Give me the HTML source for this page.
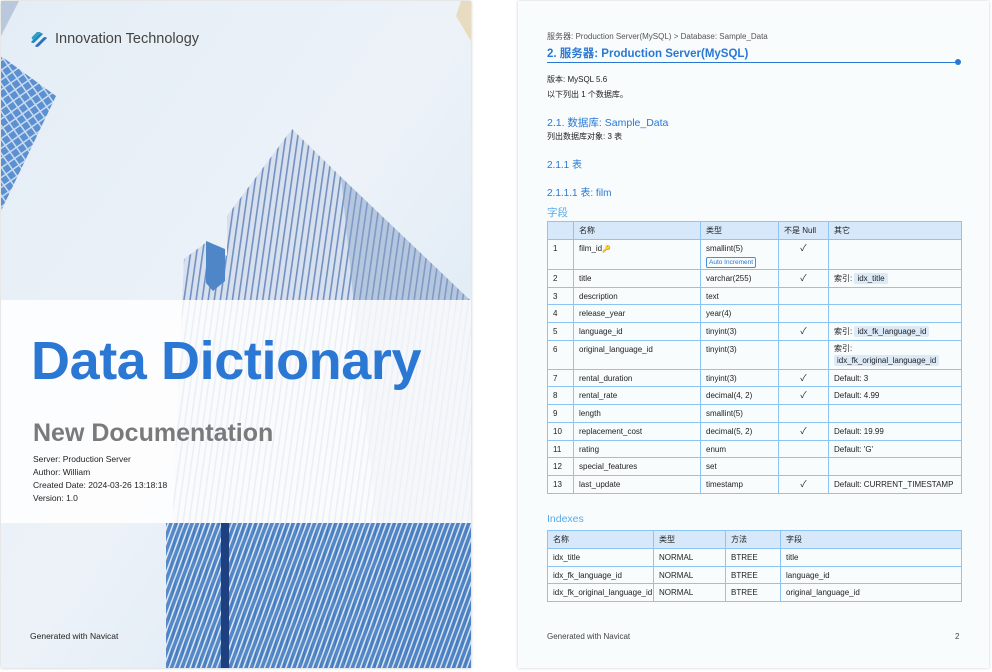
<!DOCTYPE html>
<html><head><meta charset="utf-8">
<style>
*{margin:0;padding:0;box-sizing:border-box}
body{width:992px;height:672px;background:#fff;position:relative;overflow:hidden;font-family:"Liberation Sans","Noto Sans CJK SC",sans-serif}
.cover{position:absolute;left:1px;top:1px;width:470px;height:667px;overflow:hidden;box-shadow:0 0 3px rgba(0,0,0,.25)}
.cover svg.bg{position:absolute;left:0;top:0}
.band{position:absolute;left:0;top:299px;width:470px;height:223px;background:rgba(255,255,255,.86)}
.logo{position:absolute;left:28px;top:28px;height:20px}
.logo svg{position:absolute;left:0;top:0;width:20px;height:20px}
.logo span{position:absolute;left:26px;top:2px;font-size:14.5px;color:#444;white-space:nowrap}
.dd{position:absolute;left:30px;top:329px;font-size:54px;font-weight:bold;color:#2a78d4;white-space:nowrap;letter-spacing:-0.4px}
.nd{position:absolute;left:32px;top:418px;font-size:25px;font-weight:bold;color:#7a7a7a}
.meta{position:absolute;left:32px;top:452px;font-size:8.5px;color:#222;line-height:13px}
.gen1{position:absolute;left:29px;top:630px;font-size:8.5px;color:#222}
.page{position:absolute;left:518px;top:1px;width:471px;height:667px;background:#f8fcfd;box-shadow:0 0 3px rgba(0,0,0,.2);color:#222}
.a{position:absolute;font-size:8px;white-space:nowrap}
.h{position:absolute;color:#2a78d4;white-space:nowrap}
table{position:absolute;border-collapse:collapse;font-size:8px;table-layout:fixed}
td,th{border:1px solid #8cc4f3;padding:0 0 0 5px;text-align:left;font-weight:normal;vertical-align:top;padding-top:4px;white-space:nowrap;overflow:hidden;line-height:9px}
th{background:#d7e8fa;height:18px}
td{height:17.7px}
.c{text-align:center;padding-left:0;font-size:9px}
.tag{background:#dce9f7;padding:1px 3px;border-radius:2px}
.ai{display:inline-block;border:1px solid #4a90d9;color:#2a78d4;border-radius:2px;padding:0 2px;font-size:6.5px;margin-top:4px;line-height:9px}
</style></head><body>
<div class="cover">
<svg class="bg" width="470" height="667" viewBox="0 0 470 667">
<defs>
<linearGradient id="sky" x1="0" y1="0" x2="1" y2="1"><stop offset="0" stop-color="#e4edf6"/><stop offset=".5" stop-color="#edf2f8"/><stop offset="1" stop-color="#d5e6f4"/></linearGradient>
<pattern id="st" width="6" height="6" patternUnits="userSpaceOnUse" patternTransform="rotate(8)"><rect width="6" height="6" fill="#d6e0ee"/><rect width="1.6" height="6" fill="#7390c0"/></pattern>
<pattern id="st2" width="5" height="5" patternUnits="userSpaceOnUse" patternTransform="rotate(20)"><rect width="5" height="5" fill="#3d78c0"/><rect width="1.5" height="5" fill="#dfe8f3"/></pattern>
<pattern id="gr" width="8" height="8" patternUnits="userSpaceOnUse" patternTransform="rotate(-35)"><rect width="8" height="8" fill="#5d90d0"/><rect width="8" height="1.5" fill="#c8dcf2"/><rect width="1.5" height="8" fill="#c8dcf2"/></pattern>
</defs>
<rect width="470" height="667" fill="url(#sky)"/>
<polygon points="0,55 55,95 0,210" fill="url(#gr)"/>
<polygon points="0,0 18,0 0,35" fill="#b9c8da"/>
<polygon points="460,0 470,0 470,40 455,15" fill="#e8dcc0"/>
<polygon points="183,258 207,240 226,255 226,667 165,667" fill="url(#st)"/>
<polygon points="205,240 224,248 224,280 212,290 205,282" fill="#4f86c8"/>
<polygon points="291,128 226,215 226,667 470,667 470,300 340,176" fill="url(#st)"/>
<polygon points="340,176 470,300 470,667 390,667" fill="#8ea7cc" opacity=".45"/>
<polygon points="165,522 470,522 470,667 165,667" fill="url(#st2)" opacity=".85"/>
<rect x="220" y="522" width="8" height="145" fill="#1e3f80"/>
</svg>
<div class="band"></div>
<div class="logo"><svg viewBox="0 0 20 20"><path d="M2 13 L10 5 Q12 3 14 5 L6 13 Q4 15 2 13Z" fill="#1b8bb8"/><path d="M6 17 L14 9 Q16 7 18 9 L10 17 Q8 19 6 17Z" fill="#2a6fc0"/><path d="M8 3 L12 3 L4 11 Q2 9 3 8Z" fill="#2c9fc8"/></svg><span>Innovation Technology</span></div>
<div class="dd">Data Dictionary</div>
<div class="nd">New Documentation</div>
<div class="meta">Server: Production Server<br>Author: William<br>Created Date: 2024-03-26 13:18:18<br>Version: 1.0</div>
<div class="gen1">Generated with Navicat</div>
</div>

<div class="page">
<div class="a" style="left:29px;top:30px;color:#555">服务器: Production Server(MySQL) &gt; Database: Sample_Data</div>
<div class="h" style="left:29px;top:44px;font-size:11.5px;font-weight:bold">2. 服务器: Production Server(MySQL)</div>
<div style="position:absolute;left:29px;top:61px;width:411px;height:1px;background:#2a78d4"></div>
<div style="position:absolute;left:437px;top:58px;width:6px;height:6px;border-radius:3px;background:#2a78d4"></div>
<div class="a" style="left:29px;top:73px">版本: MySQL 5.6</div>
<div class="a" style="left:29px;top:88px">以下列出 1 个数据库。</div>
<div class="h" style="left:29px;top:114px;font-size:10.5px">2.1. 数据库: Sample_Data</div>
<div class="a" style="left:29px;top:130px">列出数据库对象: 3 表</div>
<div class="h" style="left:29px;top:155px;font-size:10px">2.1.1 表</div>
<div class="h" style="left:29px;top:183px;font-size:10px">2.1.1.1 表: film</div>
<div class="h" style="left:29px;top:204px;font-size:10.5px;color:#5aa9e6">字段</div>
<table style="left:29px;top:220px;width:414px">
<colgroup><col style="width:26px"><col style="width:127px"><col style="width:78px"><col style="width:50px"><col style="width:133px"></colgroup>
<tr><th></th><th>名称</th><th>类型</th><th>不是 Null</th><th>其它</th></tr>
<tr><td style="height:30px">1</td><td>film_id<span style="color:#e8a400;font-size:7px">🔑</span></td><td>smallint(5)<br><span class="ai">Auto Increment</span></td><td class="c">✓</td><td></td></tr>
<tr><td>2</td><td>title</td><td>varchar(255)</td><td class="c">✓</td><td>索引: <span class="tag">idx_title</span></td></tr>
<tr><td>3</td><td>description</td><td>text</td><td></td><td></td></tr>
<tr><td>4</td><td>release_year</td><td>year(4)</td><td></td><td></td></tr>
<tr><td>5</td><td>language_id</td><td>tinyint(3)</td><td class="c">✓</td><td>索引: <span class="tag">idx_fk_language_id</span></td></tr>
<tr><td style="height:29px">6</td><td>original_language_id</td><td>tinyint(3)</td><td></td><td style="line-height:12px;padding-top:2px">索引:<br><span class="tag">idx_fk_original_language_id</span></td></tr>
<tr><td>7</td><td>rental_duration</td><td>tinyint(3)</td><td class="c">✓</td><td>Default: 3</td></tr>
<tr><td>8</td><td>rental_rate</td><td>decimal(4, 2)</td><td class="c">✓</td><td>Default: 4.99</td></tr>
<tr><td>9</td><td>length</td><td>smallint(5)</td><td></td><td></td></tr>
<tr><td>10</td><td>replacement_cost</td><td>decimal(5, 2)</td><td class="c">✓</td><td>Default: 19.99</td></tr>
<tr><td>11</td><td>rating</td><td>enum</td><td></td><td>Default: 'G'</td></tr>
<tr><td>12</td><td>special_features</td><td>set</td><td></td><td></td></tr>
<tr><td>13</td><td>last_update</td><td>timestamp</td><td class="c">✓</td><td>Default: CURRENT_TIMESTAMP</td></tr>
</table>
<div class="h" style="left:29px;top:512px;font-size:10.5px;color:#5aa9e6">Indexes</div>
<table style="left:29px;top:529px;width:414px">
<colgroup><col style="width:106px"><col style="width:72px"><col style="width:55px"><col style="width:181px"></colgroup>
<tr><th>名称</th><th>类型</th><th>方法</th><th>字段</th></tr>
<tr><td>idx_title</td><td>NORMAL</td><td>BTREE</td><td>title</td></tr>
<tr><td>idx_fk_language_id</td><td>NORMAL</td><td>BTREE</td><td>language_id</td></tr>
<tr><td>idx_fk_original_language_id</td><td>NORMAL</td><td>BTREE</td><td>original_language_id</td></tr>
</table>
<div class="a" style="left:29px;top:631px;color:#444">Generated with Navicat</div>
<div class="a" style="left:437px;top:631px;color:#444">2</div>
</div>
</body></html>
